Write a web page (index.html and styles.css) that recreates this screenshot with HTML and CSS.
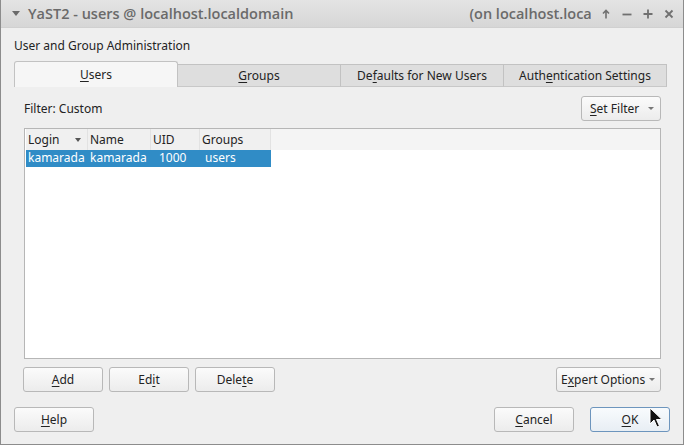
FILE: index.html
```html
<!DOCTYPE html>
<html>
<head>
<meta charset="utf-8">
<link rel="stylesheet" href="styles.css">
</head>
<body>
<div class="window">
  <div class="titlebar">
    <span class="menu-tri"></span>
    <span class="title">YaST2 - users @ localhost.localdomain</span>
    <span class="title-host">(on localhost.localdomain)</span>
    <div class="wm-buttons">
      <svg class="wm" width="10" height="10" viewBox="0 0 10 10"><path d="M5 9.5 V1.5 M2 4.5 L5 1.5 L8 4.5" fill="none" stroke="#707070" stroke-width="1.6"/></svg>
      <svg class="wm" width="10" height="10" viewBox="0 0 10 10"><path d="M0.5 5.5 H9.5" fill="none" stroke="#707070" stroke-width="1.8"/></svg>
      <svg class="wm" width="10" height="10" viewBox="0 0 10 10"><path d="M0.5 5 H9.5 M5 0.5 V9.5" fill="none" stroke="#707070" stroke-width="1.8"/></svg>
      <svg class="wm" width="10" height="10" viewBox="0 0 10 10"><path d="M1.5 1.5 L8.5 8.5 M8.5 1.5 L1.5 8.5" fill="none" stroke="#707070" stroke-width="1.8"/></svg>
    </div>
  </div>
  <div class="content">
    <div class="heading">User and Group Administration</div>
    <div class="tabs">
      <div class="tab active"><u>U</u>sers</div>
      <div class="tab"><u>G</u>roups</div>
      <div class="tab">De<u>f</u>aults for New Users</div>
      <div class="tab">Auth<u>e</u>ntication Settings</div>
    </div>
    <div class="pane">
      <div class="filter-row">
        <span class="filter-label">Filter: Custom</span>
        <button class="btn menu-btn set-filter"><span><u>S</u>et Filter</span><span class="arrow"></span></button>
      </div>
      <div class="table">
        <div class="thead">
          <div class="th c-login">Login<span class="sort"></span></div>
          <div class="th c-name">Name</div>
          <div class="th c-uid">UID</div>
          <div class="th c-groups">Groups</div>
        </div>
        <div class="row selected">
          <div class="td c-login">kamarada</div>
          <div class="td c-name">kamarada</div>
          <div class="td c-uid">1000</div>
          <div class="td c-groups">users</div>
        </div>
      </div>
      <div class="action-row">
        <button class="btn"><u>A</u>dd</button>
        <button class="btn">Ed<u>i</u>t</button>
        <button class="btn">Dele<u>t</u>e</button>
        <span class="spacer"></span>
        <button class="btn menu-btn expert"><span>E<u>x</u>pert Options</span><span class="arrow"></span></button>
      </div>
    </div>
    <div class="bottom-row">
      <button class="btn"><u>H</u>elp</button>
      <span class="spacer"></span>
      <button class="btn"><u>C</u>ancel</button>
      <button class="btn ok"><u>O</u>K</button>
    </div>
    <svg class="cursor" width="14" height="22" viewBox="0 0 14 22"><path d="M1 1 L1 17 L5 13 L8 20 L10.5 19 L7.5 12.5 L13 12.5 Z" fill="#111" stroke="#fff" stroke-width="1"/></svg>
  </div>
</div>
</body>
</html>
```

FILE: styles.css
```css
* { box-sizing: border-box; }
html, body { margin: 0; padding: 0; }
body {
  width: 684px;
  height: 445px;
  font-family: "Noto Sans", "Open Sans", sans-serif;
  font-size: 12px;
  color: #232323;
  background: #efefef;
  overflow: hidden;
}
u { text-decoration: underline; text-underline-offset: 2px; }
.window {
  width: 684px;
  height: 445px;
  border: 1px solid #8c8c8c;
  border-top: none;
  display: flex;
  flex-direction: column;
  background: #efefef;
  position: relative;
}
.titlebar {
  height: 28px;
  flex: none;
  display: flex;
  align-items: center;
  background: linear-gradient(#e4e4e4, #d6d6d6);
  border-bottom: 1px solid #d0d0d0;
  padding-left: 10px;
  color: #6a6a6a;
  font-family: "Open Sans", "Noto Sans", sans-serif;
  font-weight: 600;
  font-size: 14.5px;
  white-space: nowrap;
  overflow: hidden;
}
.menu-tri {
  width: 0; height: 0;
  border-left: 4px solid transparent;
  border-right: 4px solid transparent;
  border-top: 5px solid #6a6a6a;
  margin-right: 8px;
  margin-left: 1px;
}
.title { flex: none; }
.title-host {
  flex: 1;
  margin-left: 176px;
  margin-right: 10px;
  overflow: hidden;
  text-overflow: clip;
  white-space: nowrap;
  min-width: 0;
}
.wm-buttons {
  flex: none;
  display: flex;
  align-items: center;
  gap: 11px;
  padding-right: 9px;
  padding-top: 1px;
}
.wm { display: block; flex: none; }
.content {
  flex: 1;
  padding: 10px 13px 0 13px;
  display: flex;
  flex-direction: column;
  position: relative;
}
.heading {
  height: 16px;
  line-height: 16px;
  margin-bottom: 7px;
}
.tabs {
  display: flex;
  height: 26px;
  align-items: flex-end;
}
.tab {
  width: 164px;
  height: 23px;
  text-align: center;
  line-height: 22px;
  background: #dedede;
  border: 1px solid #c2c2c2;
  border-bottom: 1px solid #c8c8c8;
  margin-left: -1px;
}
.tab:first-child { margin-left: 0; }
.tab.active {
  height: 26px;
  line-height: 26px;
  background: #f6f6f6;
  border-color: #c2c2c2;
  border-bottom: none;
  border-radius: 3px 3px 0 0;
  z-index: 1;
}
.pane {
  flex: none;
  display: flex;
  flex-direction: column;
  padding: 8px 9px 0 10px;
}
.filter-row {
  display: flex;
  align-items: center;
  justify-content: space-between;
  height: 26px;
  margin-bottom: 7px;
}
.btn {
  font-family: inherit;
  font-size: 12px;
  color: #232323;
  height: 25px;
  width: 80px;
  background: linear-gradient(#fbfbfb, #ececec);
  border: 1px solid #b8b8b8;
  border-radius: 3px;
  padding: 0;
  display: inline-flex;
  align-items: center;
  justify-content: center;
  white-space: nowrap;
}
.menu-btn { justify-content: space-between; padding: 0 6px 0 8px; }
.set-filter { width: 80px; }
.expert { width: 105px; padding: 0 5px 0 4px; }
.arrow {
  width: 0; height: 0;
  border-left: 3px solid transparent;
  border-right: 3px solid transparent;
  border-top: 3px solid #777;
}
.table {
  height: 231px;
  background: #fff;
  border: 1px solid #b6b6b6;
  display: flex;
  flex-direction: column;
  padding: 0 0 0 1px;
}
.thead {
  display: flex;
  height: 21px;
  background: #f2f2f2;
}
.th {
  line-height: 21px;
  padding-left: 2px;
  border-right: 1px solid #e2e2e2;
  position: relative;
  background: #f0f0f0;
}
.thead::after { content: ""; flex: 1; background: #f4f4f4; }
.sort {
  position: absolute;
  right: 6px;
  top: 9px;
  width: 0; height: 0;
  border-left: 3.5px solid transparent;
  border-right: 3.5px solid transparent;
  border-top: 4px solid #555;
}
.c-login { width: 62px; }
.c-name { width: 63px; }
.c-uid { width: 49px; }
.c-groups { width: 71px; }
.row { display: flex; height: 17px; }
.row.selected .td { background: #308cc6; color: #fff; }
.td { line-height: 16px; padding-left: 2px; }
.td.c-uid { padding-left: 8px; }
.td.c-groups { padding-left: 5px; }
.action-row {
  display: flex;
  gap: 6px;
  margin-top: 8px;
  margin-left: -1px;
}
.spacer { flex: 1; }
.bottom-row {
  display: flex;
  gap: 16px;
  margin-top: 15px;
}
.ok {
  border-color: #6d95bd;
  background: linear-gradient(#f8fbfd, #e8eef4);
}
.cursor {
  position: absolute;
  left: 648px;
  top: 379px;
}
```
